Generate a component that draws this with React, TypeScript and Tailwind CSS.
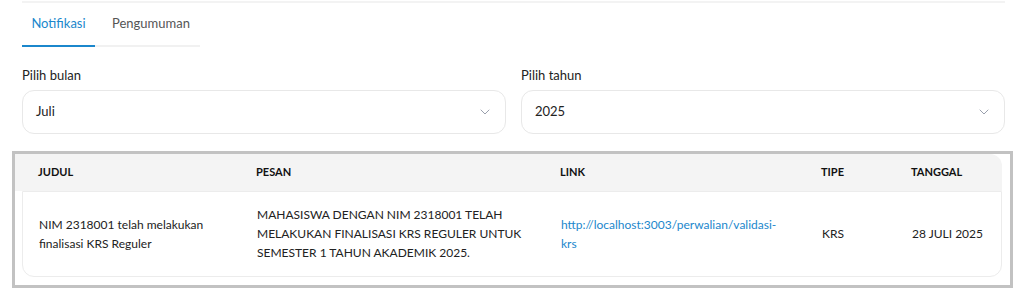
import { ChevronDown } from 'lucide-react';

const font = { fontFamily: 'Lato, "Noto Sans", sans-serif' };

function Select({ label, value }: { label: string; value: string }) {
  return (
    <div className="flex-1">
      <p className="text-[13px] text-[#222] mb-[7px] leading-4">{label}</p>
      <div className="h-[44px] rounded-xl border border-[#e8e8e8] bg-white flex items-center justify-between pl-[13px] pr-[12px]">
        <span className="text-[13px] text-[#222]">{value}</span>
        <ChevronDown className="w-4 h-4 text-[#9aa0ad]" strokeWidth={1.5} />
      </div>
    </div>
  );
}

const cols = 'grid grid-cols-[218px_304px_261px_90px_1fr]';

export default function App() {
  const th = 'px-4 text-left text-[11px] font-bold text-[#111]';
  const td = 'px-4';
  return (
    <div className="bg-white w-[1025px] h-[298px] overflow-hidden" style={font}>
      <div className="ml-[22px] mr-[20px] border-t-2 border-[#f3f3f3] mt-[1px]" />
      <div className="px-[22px] pt-[11px]">
        <div className="flex w-[178px] border-b-2 border-[#f1f1f1]">
          <button className="w-[73px] pb-[11px] text-[13px] text-[#1b87cc] border-b-2 border-[#1b87cc] -mb-[2px]">Notifikasi</button>
          <button className="pl-[17px] pb-[11px] text-[13px] text-[#555]">Pengumuman</button>
        </div>
      </div>
      <div className="flex gap-[15px] pl-[22px] pr-[20px] pt-[20px]">
        <Select label="Pilih bulan" value="Juli" />
        <Select label="Pilih tahun" value="2025" />
      </div>
      <div className="mx-[12px] mt-[17px] border-[3px] border-[#c2c2c2] pr-[8px] pb-[8px]">
        <div className={`${cols} bg-[#f4f4f4] rounded-tr-xl h-[37px] items-center pl-[7px]`}>
          <span className={th}>JUDUL</span>
          <span className={th}>PESAN</span>
          <span className={th}>LINK</span>
          <span className={th}>TIPE</span>
          <span className={th}>TANGGAL</span>
        </div>
        <div className={`${cols} ml-[7px] border border-[#ececec] rounded-b-xl h-[86px] items-center text-[12px] leading-[19px] text-[#222]`}>
          <span className={td}>NIM 2318001 telah melakukan finalisasi KRS Reguler</span>
          <span className={td}>MAHASISWA DENGAN NIM 2318001 TELAH MELAKUKAN FINALISASI KRS REGULER UNTUK SEMESTER 1 TAHUN AKADEMIK 2025.</span>
          <a href="#" className={`${td} text-[#1b87cc]`}>http://localhost:3003/perwalian/validasi-krs</a>
          <span className={td}>KRS</span>
          <span className={td}>28 JULI 2025</span>
        </div>
      </div>
    </div>
  );
}
